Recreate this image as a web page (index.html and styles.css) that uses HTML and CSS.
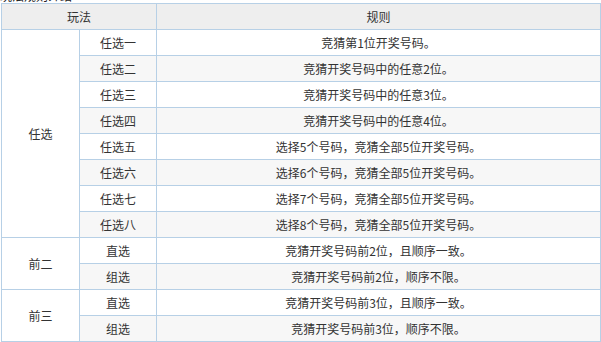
FILE: index.html
```html
<!DOCTYPE html>
<html>
<head>
<meta charset="utf-8">
<link rel="stylesheet" href="styles.css">
</head>
<body>
<div class="caption"><span>玩法规则介绍</span></div>
<table class="rules">
  <colgroup><col class="c1"><col class="c2"><col class="c3"></colgroup>
  <thead>
    <tr><th colspan="2">玩法</th><th>规则</th></tr>
  </thead>
  <tbody>
    <tr><td rowspan="8" class="group">任选</td><td>任选一</td><td>竞猜第1位开奖号码。</td></tr>
    <tr class="alt"><td>任选二</td><td>竞猜开奖号码中的任意2位。</td></tr>
    <tr><td>任选三</td><td>竞猜开奖号码中的任意3位。</td></tr>
    <tr class="alt"><td>任选四</td><td>竞猜开奖号码中的任意4位。</td></tr>
    <tr><td>任选五</td><td>选择5个号码，竞猜全部5位开奖号码。</td></tr>
    <tr class="alt"><td>任选六</td><td>选择6个号码，竞猜全部5位开奖号码。</td></tr>
    <tr><td>任选七</td><td>选择7个号码，竞猜全部5位开奖号码。</td></tr>
    <tr class="alt"><td>任选八</td><td>选择8个号码，竞猜全部5位开奖号码。</td></tr>
    <tr><td rowspan="2" class="group">前二</td><td>直选</td><td>竞猜开奖号码前2位，且顺序一致。</td></tr>
    <tr class="alt"><td>组选</td><td>竞猜开奖号码前2位，顺序不限。</td></tr>
    <tr><td rowspan="2" class="group">前三</td><td>直选</td><td>竞猜开奖号码前3位，且顺序一致。</td></tr>
    <tr class="alt"><td>组选</td><td>竞猜开奖号码前3位，顺序不限。</td></tr>
  </tbody>
</table>
</body>
</html>
```

FILE: styles.css
```css
html, body {
  margin: 0;
  padding: 0;
  background: #fff;
}
body {
  font-family: "Noto Sans CJK SC", "Noto Sans", sans-serif;
  font-size: 12px;
  color: #333;
}
.caption {
  height: 3px;
  overflow: hidden;
}
.caption span {
  display: block;
  line-height: 12px;
  margin-top: -10px;
  color: #222;
}
.rules {
  margin-left: 1px;
  width: 600px;
  border-collapse: collapse;
  table-layout: fixed;
}
.c1 { width: 78px; }
.c2 { width: 77px; }
.rules th,
.rules td {
  border: 1px solid #b7d0e6;
  height: 25px;
  padding: 0;
  text-align: center;
  vertical-align: middle;
  font-weight: normal;
  line-height: 14px;
}
.rules th {
  background: #eeeeee;
}
.rules tr.alt td {
  background: #f7f7f7;
}
.rules td.group {
  background: #fff;
}
```
